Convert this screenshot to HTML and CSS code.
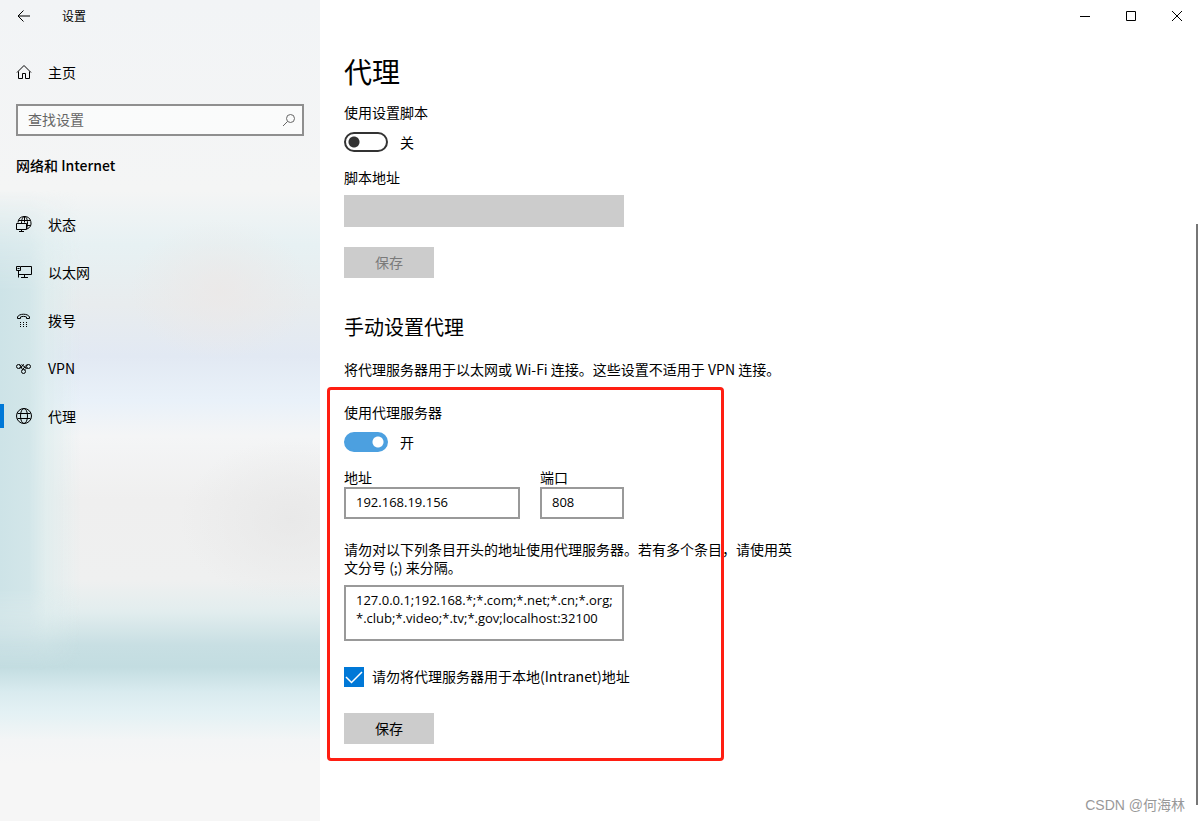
FILE: index.html
```
<!DOCTYPE html>
<html lang="zh-CN">

<head>
  <meta charset="utf-8">
  <meta name="viewport" content="width=device-width, initial-scale=1">
  <title>设置</title>
  <link rel="stylesheet" href="styles.css">
</head>

<body>
  <div class="sidebar">
    <div class="titlebar">
      <button class="back" type="button" aria-label="返回">
        <svg width="14" height="12" viewBox="0 0 14 12"><path d="M13 6H1M6.500 .5L1 6l5.500 5.500"/></svg>
      </button>
      <span class="app-name">设置</span>
    </div>

    <a class="nav-link home" href="#home">
      <svg width="16" height="16" viewBox="0 0 16 16"><path d="M1 8.500L8 1.500l7 7M2.500 7.500v7h4v-5h3v5h4v-7"/></svg>
      <span>主页</span>
    </a>

    <div class="search">
      <input type="text" placeholder="查找设置" aria-label="查找设置">
      <svg width="14" height="14" viewBox="0 0 14 14"><circle cx="8.500" cy="5.500" r="4"/><path d="M5.500 8.500L1 13"/></svg>
    </div>

    <h2 class="group">网络和 Internet</h2>

    <nav>
      <a class="nav-link" href="#status">
        <svg width="16" height="16" viewBox="0 0 16 16"><path d="M2 6.500A6.500 6.500 0 1 1 11 13M3 4.500h11M11 9.500h3.500M5.500 7C5.500 3 7 .5 8.500 .5s3 2.500 3 6.500-.5 5-1.500 6M8.500 .5v6M.5 7.500h10v6H.5zM5.500 13.500v2M3 15.500h5"/></svg>
        <span>状态</span>
      </a>
      <a class="nav-link" href="#ethernet">
        <svg width="16" height="16" viewBox="0 0 16 16"><path d="M5 2.500h10.500v8H3M8.500 10.500v3M5 13.500h7M.5 2.500h4v4h-4zM2.500 6.500v7M1.500 4.500h2"/></svg>
        <span>以太网</span>
      </a>
      <a class="nav-link" href="#dialup">
        <svg width="16" height="16" viewBox="0 0 16 16"><path d="M1.500 6.500V5C3 1.300 12 1.300 13.500 5v1.500h-3V5C9 4.200 6 4.200 4.500 5v1.500z"/><path d="M4 10.500h1m2 0h1m2 0h1M4 12.500h1m2 0h1m2 0h1M4 14.500h1m2 0h1m2 0h1"/></svg>
        <span>拨号</span>
      </a>
      <a class="nav-link" href="#vpn">
        <svg width="16" height="16" viewBox="0 0 16 16"><circle cx="2.500" cy="6.500" r="2"/><circle cx="12.500" cy="6.500" r="2"/><circle cx="7.500" cy="11.500" r="2"/><path d="M3.500 4.700C6 5.500 5 8 6.500 9.700M3.500 8.300C6 8 6 4.500 8 4.500M11.500 4.700C9 5 9.500 7.500 6 9.800M11.500 8.300C9.800 8.300 9.800 9 8.500 9.800M5.500 4.500L10 8"/></svg>
        <span>VPN</span>
      </a>
      <a class="nav-link active" href="#proxy">
        <svg width="16" height="16" viewBox="0 0 16 16"><circle cx="8" cy="8" r="7.500"/><ellipse cx="8" cy="8" rx="3.500" ry="7.500"/><path d="M1.500 5.500h13M1.500 10.500h13"/></svg>
        <span>代理</span>
      </a>
    </nav>
  </div>

  <div class="main">
    <div class="window-buttons">
      <button type="button" aria-label="最小化"><svg width="10" height="10" viewBox="0 0 10 10"><path d="M0 5.500h10"/></svg></button>
      <button type="button" aria-label="最大化"><svg width="10" height="10" viewBox="0 0 10 10"><path d="M.5 .5h9v9h-9z"/></svg></button>
      <button type="button" aria-label="关闭"><svg width="10" height="10" viewBox="0 0 10 10"><path d="M0 0l10 10M10 0L0 10"/></svg></button>
    </div>

    <div class="content">
      <h1>代理</h1>

      <label for="use-script">使用设置脚本</label>
      <div class="switch-row">
        <input class="switch" type="checkbox" role="switch" id="use-script">
        <span>关</span>
      </div>

      <label for="script-url">脚本地址</label>
      <input class="field disabled-field" type="text" id="script-url" disabled>
      <button class="save" type="button" disabled>保存</button>

      <h2 class="section-title">手动设置代理</h2>
      <p class="intro">将代理服务器用于以太网或 Wi-Fi 连接。这些设置不适用于 VPN 连接。</p>

      <div class="manual">
        <label for="use-proxy">使用代理服务器</label>
        <div class="switch-row">
          <input class="switch" type="checkbox" role="switch" id="use-proxy" checked>
          <span>开</span>
        </div>

        <div class="address-row">
          <div class="address">
            <label for="address">地址</label>
            <input class="field" type="text" id="address" value="192.168.19.156">
          </div>
          <div class="port">
            <label for="port">端口</label>
            <input class="field" type="text" id="port" value="808">
          </div>
        </div>

        <label class="hint" for="bypass">请勿对以下列条目开头的地址使用代理服务器。若有多个条目，请使用英文分号 (;) 来分隔。</label>
        <textarea class="field bypass" id="bypass" spellcheck="false">127.0.0.1;192.168.*;*.com;*.net;*.cn;*.org;
*.club;*.video;*.tv;*.gov;localhost:32100</textarea>

        <div class="check-row">
          <span class="check">
            <input type="checkbox" id="intranet" checked>
            <svg width="20" height="20" viewBox="0 0 20 20"><path d="M2 10l5.500 5.500L18 5"/></svg>
          </span>
          <label for="intranet">请勿将代理服务器用于本地(Intranet)地址</label>
        </div>

        <button class="save" type="button">保存</button>
        <div class="highlight"></div>
      </div>
    </div>

    <div class="scroll-thumb"></div>
    <div class="watermark">CSDN @何海林</div>
  </div>
</body>
</html>
```

FILE: styles.css
```
*
{
   box-sizing: border-box;
}
body
{
   margin: 0;
   min-height: 100vh;
   display: flex;
   background: white;
   color: black;
   font-family: "Noto Sans CJK SC", "Open Sans", sans-serif;
   font-size: 14px;
   line-height: 18px;
}
h1, h2, p
{
   margin: 0;
   font-weight: normal;
}
label
{
   display: block;
}
button, input, textarea
{
   font: inherit;
   color: inherit;
   margin: 0;
   border-radius: 0;
}
button
{
   border: 0;
   padding: 0;
   background: none;
}
svg
{
   fill: none;
   stroke: black;
   stroke-width: 1;
   flex: none;
}

/* sidebar */
.sidebar
{
   width: 320px;
   flex: none;
   position: relative;
   z-index: 0;
   background:
      radial-gradient(ellipse 90px 70px at 220px 290px, rgba(236,232,231,0.8), rgba(236,232,231,0)),
      radial-gradient(ellipse 110px 80px at 290px 520px, rgba(231,231,231,0.8), rgba(231,231,231,0)),
      linear-gradient(#f2f4f6 0, #f4f5f5 190px, #e7f1f3 245px, #e8ecee 305px, #e2e9f3 356px, #e9f1f9 400px, #f4f5f6 436px, #efefef 500px, #eff0f0 580px, #e2edee 612px, #c8dfe3 645px, #c3dde1 667px, #d9ebef 692px, #e3f1f4 712px, #f3f5f6 740px, #f6f6f6 765px);
}
/* tint along the left edge, fading out at both ends */
.sidebar::before
{
   content: "";
   position: absolute;
   z-index: -1;
   top: 190px;
   left: 0;
   width: 80px;
   height: 480px;
   background: linear-gradient(to right, #cde3e7, #d3e6e9 30px, rgba(219,236,237,0.7) 45px, rgba(225,238,239,0));
   mask-image: linear-gradient(transparent, black 100px, black 400px, transparent);
}
.titlebar
{
   height: 32px;
   display: flex;
   align-items: center;
}
.back
{
   width: 48px;
   height: 32px;
   display: flex;
   align-items: center;
   justify-content: center;
}
.app-name
{
   margin-left: 14px;
   font-size: 12px;
}
.nav-link
{
   height: 48px;
   padding-left: 16px;
   display: flex;
   align-items: center;
   gap: 16px;
   color: black;
   text-decoration: none;
}
.home
{
   margin-top: 16px;
}
.search
{
   height: 32px;
   margin: 8px 16px 0;
   padding-right: 6px;
   display: flex;
   align-items: center;
   background: rgba(255,255,255,0.6);
   border: 2px solid #8f8f8f;
}
.search input
{
   flex: 1;
   min-width: 0;
   padding: 0 10px 2px;
   border: 0;
   background: none;
}
.search input::placeholder
{
   color: #666;
   opacity: 1;
}
.search svg
{
   stroke: #666;
}
.group
{
   margin: 20px 16px 26px;
   font-size: 14px;
   font-weight: 500;
}
.active
{
   background: linear-gradient(#0078d7, #0078d7) no-repeat left center / 4px 24px;
}

/* main area */
.main
{
   flex: 1;
   min-width: 0;
   position: relative;
}
.window-buttons
{
   display: flex;
   justify-content: flex-end;
}
.window-buttons button
{
   width: 46px;
   height: 32px;
   display: flex;
   align-items: center;
   justify-content: center;
}
.content
{
   padding: 19px 24px 40px;
}
h1
{
   margin-bottom: 12px;
   font-size: 28px;
   line-height: 40px;
}
.switch-row
{
   height: 20px;
   margin: 11px 0 16px;
   display: flex;
   align-items: center;
   gap: 12px;
}
.switch
{
   appearance: none;
   width: 44px;
   height: 20px;
   border: 2px solid #333;
   border-radius: 10px;
   background: radial-gradient(circle at 8px 8px, #333 5px, transparent 6px);
}
.switch:checked
{
   border-color: #4ca0e0;
   background: radial-gradient(circle at 32px 8px, white 5px, #4ca0e0 6px);
}
.field
{
   display: block;
   width: 100%;
   height: 32px;
   padding: 0 10px 2px;
   border: 2px solid #999;
   background: white;
   font-family: "Open Sans", "Noto Sans CJK SC", sans-serif;
   font-size: 13px;
}
.disabled-field
{
   max-width: 280px;
   margin: 9px 0 20px;
   border-color: #ccc;
   background: #ccc;
}
.save
{
   display: block;
   width: 90px;
   height: 31px;
   padding-bottom: 2px;
   background: #ccc;
}
.save:disabled
{
   color: #7a7a7a;
}
.section-title
{
   margin: 35px 0 19px;
   font-size: 20px;
   line-height: 28px;
}
.intro
{
   margin-bottom: 25px;
}
.manual
{
   position: relative;
   max-width: 456px;
}
.address-row
{
   max-width: 280px;
   display: flex;
   gap: 20px;
}
.address-row label
{
   margin-bottom: 1px;
}
.address
{
   flex: 1;
}
.port
{
   width: 84px;
}
.hint
{
   margin: 21px 0 9px;
}
.bypass
{
   max-width: 280px;
   height: 56px;
   padding: 4px 0 4px 10px;
   resize: none;
   overflow: hidden;
}
.check-row
{
   height: 20px;
   margin: 26px 0;
   display: flex;
   gap: 8px;
}
.check
{
   display: grid;
}
.check input, .check svg
{
   grid-area: 1 / 1;
}
.check input
{
   appearance: none;
   width: 20px;
   height: 20px;
   background: #0078d7;
}
.check svg
{
   stroke: white;
   stroke-width: 1.5;
   pointer-events: none;
}

/* things drawn over the page */
.highlight
{
   position: absolute;
   top: -16px;
   bottom: -17px;
   left: -17px;
   width: 397px;
   border: 3px solid #ff1e12;
   border-radius: 4px;
   pointer-events: none;
}
.scroll-thumb
{
   position: absolute;
   top: 224px;
   right: 2px;
   bottom: 16px;
   width: 2px;
   background: #767676;
}
.watermark
{
   position: absolute;
   right: 15px;
   bottom: 7px;
   color: #999;
   font-family: "Liberation Sans", "Noto Sans CJK SC", sans-serif;
}
```
